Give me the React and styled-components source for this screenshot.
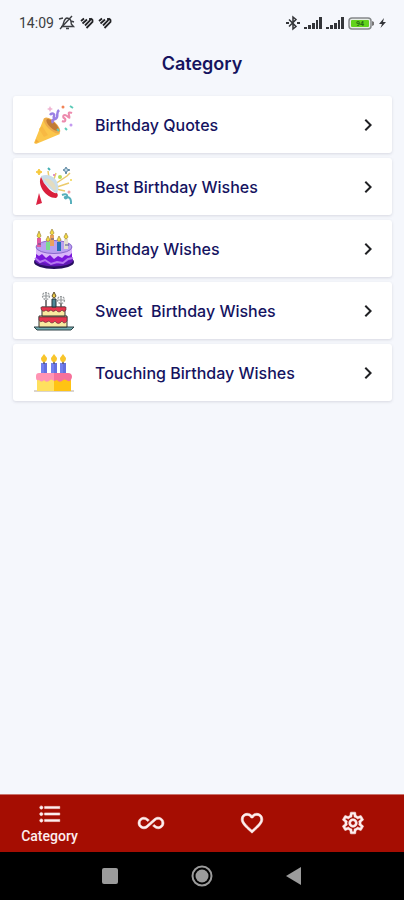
import React from "react";
import styled, { createGlobalStyle } from "styled-components";
import {
  MdAllInclusive,
  MdChevronRight,
  MdFavoriteBorder,
  MdFormatListBulleted,
  MdOutlineSettings,
} from "react-icons/md";

const GlobalStyle = createGlobalStyle`
  *, *::before, *::after { box-sizing: border-box; }
  body {
    margin: 0;
    background: #f5f7fc;
    font-family: Inter, "Noto Sans", sans-serif;
  }
`;

const Screen = styled.div`
  display: flex;
  flex-direction: column;
  min-height: 100vh;
`;

const StatusBar = styled.div`
  display: flex;
  align-items: center;
  justify-content: space-between;
  height: 46px;
  padding: 0 18px 0 19px;
  color: #3c3e42;
`;

const StatusGroup = styled.div`
  display: flex;
  align-items: center;
  gap: ${(p) => p.$gap}px;
`;

const Clock = styled.time`
  font: 400 14px/20px Roboto, sans-serif;
`;

const Title = styled.h1`
  margin: 0;
  padding: 4px 0 18px;
  color: #15135f;
  font-size: 18px;
  font-weight: 600;
  line-height: 28px;
  text-align: center;
`;

const CategoryList = styled.ul`
  display: flex;
  flex: 1;
  flex-direction: column;
  gap: 5px;
  margin: 0;
  padding: 0 12px 24px 13px;
  list-style: none;
`;

const CategoryCard = styled.button`
  display: flex;
  align-items: center;
  width: 100%;
  height: 57px;
  padding: 0 12px 0 21px;
  border: 0;
  border-radius: 3px;
  background: #fff;
  box-shadow: 0 1px 3px rgba(60, 65, 85, 0.16);
  color: #15135f;
  font: inherit;
  text-align: left;
  cursor: pointer;
`;

const CategoryName = styled.span`
  flex: 1;
  margin-left: 21px;
  font-size: 16px;
  font-weight: 500;
  line-height: 24px;
  white-space: pre;
`;

const Chevron = styled(MdChevronRight)`
  color: #202124;
`;

const TabBar = styled.nav`
  display: grid;
  grid-template-columns: repeat(4, 1fr);
  height: 58px;
  border-top: 1px solid #c9736d;
  background: #a50d02;
`;

const Tab = styled.button`
  display: flex;
  flex-direction: column;
  align-items: center;
  justify-content: center;
  padding: 0 2px 2px 0;
  border: 0;
  background: none;
  color: #fdeeee;
  font: 500 14px/18px Roboto, sans-serif;
  cursor: pointer;

  svg {
    overflow: visible;
    stroke-width: 0.5;
  }

  path[fill="none"] {
    stroke: none;
  }
`;

const SystemBar = styled.div`
  display: flex;
  align-items: center;
  justify-content: center;
  gap: 68px;
  height: 48px;
  background: #000;
`;

const SystemButton = styled.button`
  display: flex;
  padding: 0;
  border: 0;
  background: none;
  color: #9b9b9b;
`;

const MutedBell = () => (
  <svg width="18" height="16" viewBox="0 0 18 16" fill="none" stroke="currentColor" strokeWidth="1.4">
    <path d="M4 11.5c2-1.500 1-7.500 5-8.500 4 .5 4 3 4.300 6l2.200 2.500H3M8 13.500h3M2 14 14 1M1 4l4-1M13 6l3 1" />
  </svg>
);

const StripedHeart = () => (
  <svg width="14" height="12" viewBox="0 0 14 12" fill="none" stroke="#222326" strokeWidth="1.8">
    <path d="m1 4 3-2.500M2.500 6.500 7 2.500M5 8.500 10 3.500V1M6.500 11l6-6V3L11 1.500" />
  </svg>
);

const Bluetooth = () => (
  <svg width="14" height="16" viewBox="0 0 14 16" fill="none" stroke="#333539" strokeWidth="1.500">
    <path d="m3 4.500 7 7L7 14V2l3 2.500-7 7" />
    <path d="M0 8h3M11 8h3" strokeWidth="2" />
  </svg>
);

const Signal = () => (
  <svg width="18" height="12" viewBox="0 0 18 12" fill="#333539">
    <path d="M0 10h3v2H0zM4 8h3v4H4zM8 6h3v6H8zM12 3h2v9h-2zM15 0h3v12h-3z" />
  </svg>
);

const Battery = () => (
  <svg width="27" height="13" viewBox="0 0 27 13">
    <rect x="1" y="1" width="22" height="11" rx="3" fill="#e8eee8" stroke="#85888a" strokeWidth="1.500" />
    <rect x="3" y="3" width="18" height="7" rx="1" fill="#62d31c" />
    <path d="M24 4l2 1v3l-2 1z" fill="#777" />
    <text x="12" y="9" fontFamily="Roboto, sans-serif" fontSize="7" fontWeight="700" textAnchor="middle" fill="#276c16">94</text>
  </svg>
);

const Bolt = () => (
  <svg width="7" height="10" viewBox="0 0 7 10" fill="#333539">
    <path d="M5 0 0 6h3L1.500 10 7 4H4z" />
  </svg>
);

const Picture = ({ children }) => (
  <svg width="40" height="40" viewBox="0 0 40 40" aria-hidden="true">{children}</svg>
);

const PartyCone = () => (
  <Picture>
    <path d="M0 38 10 13q10 3 16 16L2 39z" fill="#fbc64b" />
    <path d="m8 21 6 9-4 2-5-8z" fill="#f8b943" />
    <path d="M2 34l3 3-4 1z" fill="#f3a93a" />
    <ellipse cx="18" cy="20.500" rx="10.500" ry="4.500" transform="rotate(43 18 20.500)" fill="#ecab4b" />
    <ellipse cx="18.500" cy="20" rx="8" ry="3" transform="rotate(43 18.500 20)" fill="#c17b35" />
    <path d="M16 10c2-3 5-1 4 1s2 4 3 1-1-4 2-7M19 18c-2-3 2-5 3-3" fill="none" stroke="#9a80e4" strokeWidth="2.500" />
    <path d="M28 16c4 2 4-2 2-3s0-5 3-2 3 2 2-1 1-3 3-2" fill="none" stroke="#ed8aad" strokeWidth="2" />
    <path d="m16 1 1 2 2 1-2 1-1 2-1-2-2-1 2-1z" fill="#efb4d2" />
    <circle cx="37" cy="20" r="1.500" fill="#c39af0" />
    <circle cx="29" cy="2" r="1.500" fill="#f18457" />
    <path d="m36 1 3 2M31 23l2 2M23 24l2 2" stroke="#5dcbb8" strokeWidth="2" />
  </Picture>
);

const PartyPopper = () => (
  <Picture>
    <path d="M16 18 14 4M18 18l4-12M18 19l15-10 3-3M20 21l15-5M22 22l9 2" fill="none" stroke="#eccb6c" strokeWidth="1.500" />
    <path d="M7 9q9-3 15 4 4 6 1 14Q14 21 7 13z" fill="#c9ddea" />
    <path d="M10 12q5-2 10 4 3 5 1 8Q15 18 10 12" fill="#e3dcc0" />
    <path d="M7 10C3 17 11 31 22 31q3-2 1-5-4 1-9-5-5-5-7-11" fill="#d91f3c" />
    <path d="m5 26 3 10-6 2z" fill="#dc2343" />
    <path d="M28 28c8-3 5 5 3 3s7-3 6 6" fill="none" stroke="#55afbb" strokeWidth="2" />
    <path d="m5 2 1 2 2 1-2 1-1 2-1-2-2-1 2-1z" fill="#f7c93c" stroke="#f7c93c" />
    <path d="m32 0 1 2 3 1-3 1-1 3-1-3-2-1 2-1z" fill="#bcd5e3" stroke="#5e88a2" />
    <path d="m14 1 2 2" stroke="#43afb3" strokeWidth="2" />
    <circle cx="26" cy="10" r="2" fill="#b9da55" />
    <circle cx="20" cy="8" r="1" fill="#d672bc" />
    <circle cx="35" cy="25" r="1.500" fill="#f1a1a4" />
    <circle cx="37" cy="13" r="1" fill="#efd34b" />
  </Picture>
);

const PurpleCake = () => (
  <Picture>
    <ellipse cx="20" cy="33" rx="20" ry="7" fill="#28105f" />
    <ellipse cx="20" cy="31.500" rx="19" ry="6" fill="#5f18b4" />
    <path d="M2 18v12q18 11 36 0V18" fill="#7b18dc" />
    <path d="M2 19v6l3 2 3-2 4 4 4-3 4 4 4-3 4 2 3-3 4 1 3-3v-5" fill="#d9b5fa" />
    <ellipse cx="20" cy="18" rx="18" ry="6.500" fill="#b9a0f0" stroke="#8a66cc" />
    <path d="m1 29 5 4 5-2 6 4 6-2 6 1 5-4 5-1" fill="none" stroke="#b477ee" strokeWidth="2" />
    <path d="M5 9v9" stroke="#e05ba4" strokeWidth="4" />
    <path d="M14 13v8" stroke="#7bdb90" strokeWidth="4" />
    <path d="M18 6v11" stroke="#eba15d" strokeWidth="4" />
    <path d="M25 13v9" stroke="#2570b7" strokeWidth="4" />
    <path d="M32 10v10" stroke="#e5e0d0" strokeWidth="4" />
    <path d="M4 15h3M17 10h3M31 16h4" stroke="#4c538e" />
    <g fill="#f4db40" stroke="#9c843b" strokeWidth=".7">
      <path d="m5 2 2 5q-2 4-4 0zM18 0l2 4q-2 4-4 0zM14 7l2 4q-2 3-4 0zM25 7l2 4q-2 3-4 0zM32 4l2 4q-2 4-4 0z" />
    </g>
  </Picture>
);

const TieredCake = () => (
  <Picture>
    <path d="M0 36h40l-3 3H3z" fill="#6fabb0" stroke="#304347" />
    <path d="M5 25h28v11H5z" fill="#faeaa0" stroke="#353333" />
    <path d="M8 16h23v9H8z" fill="#faeaa0" stroke="#353333" />
    <path d="M7 16h25v3q-2 3-4 0-3 4-6 0-3 3-5 0-3 3-5 0-3 3-5-1z" fill="#e5364e" stroke="#532b34" strokeWidth=".6" />
    <path d="M5 26h28v4q-3 4-5 0-4 5-7 0-3 4-6 0-4 3-6 0-3 2-4-1z" fill="#e5364e" stroke="#532b34" strokeWidth=".6" />
    <path d="M18 8h4v8h-4z" fill="#4c8796" stroke="#27373c" />
    <path d="m20 1 2 4q-2 4-4 0z" fill="#edca45" stroke="#5e5030" />
    <path d="M12 9v7M27 12v4" stroke="#555" strokeWidth="1.500" />
    <g fill="none" stroke="#969a9c" strokeWidth="1.200">
      <circle cx="12" cy="5" r="3.500" strokeDasharray="2 1" />
      <circle cx="27" cy="9" r="3.500" strokeDasharray="2 1" />
      <path d="M12 2v6M9 5h6M27 6v6M24 9h6" />
    </g>
  </Picture>
);

const CandleCake = () => (
  <Picture>
    <path d="M0 38h40" stroke="#b6a99c" />
    <path d="M3 26h17v12H3z" fill="#ffe05e" />
    <path d="M20 26h17v12H20z" fill="#ffc313" />
    <path d="M7 10h6v12H7zM17 10h6v12h-6zM26 10h6v12h-6z" fill="#7380ee" />
    <path d="M10 10h3v12h-3zM20 10h3v12h-3zM29 10h3v12h-3z" fill="#6470df" />
    <path d="M10 8v3M20 8v3M29 8v3" stroke="#625a58" strokeWidth="1.500" />
    <path d="m10 1 3 4q0 4-3 4-3 0-3-4zM20 1l3 4q0 4-3 4-3 0-3-4zM29 1l3 4q0 4-3 4-3 0-3-4z" fill="#f8c52b" />
    <path d="M5 20h15v8q-3-3-5 0-3 2-5-1-2 3-5 0-3 1-3-2v-2q0-3 3-3" fill="#ff94b4" />
    <path d="M20 20h14q4 0 4 4-1 5-4 4-4-3-6 0-3 2-5-1l-3 1z" fill="#f6719b" />
  </Picture>
);

const categories = [
  { name: "Birthday Quotes", Art: PartyCone },
  { name: "Best Birthday Wishes", Art: PartyPopper },
  { name: "Birthday Wishes", Art: PurpleCake },
  { name: "Sweet  Birthday Wishes", Art: TieredCake },
  { name: "Touching Birthday Wishes", Art: CandleCake },
];

export default function App() {
  return (
    <Screen>
      <GlobalStyle />
      <StatusBar>
        <StatusGroup $gap={4}>
          <Clock>14:09</Clock>
          <MutedBell />
          <StripedHeart />
          <StripedHeart />
        </StatusGroup>
        <StatusGroup $gap={4}>
          <Bluetooth />
          <Signal />
          <Signal />
          <Battery />
          <Bolt />
        </StatusGroup>
      </StatusBar>
      <Title>Category</Title>
      <CategoryList>
        {categories.map(({ name, Art }) => (
          <li key={name}>
            <CategoryCard type="button">
              <Art />
              <CategoryName>{name}</CategoryName>
              <Chevron size={24} />
            </CategoryCard>
          </li>
        ))}
      </CategoryList>
      <TabBar>
        <Tab type="button" aria-current="page">
          <MdFormatListBulleted size={26} />
          Category
        </Tab>
        <Tab type="button" aria-label="Explore"><MdAllInclusive size={26} /></Tab>
        <Tab type="button" aria-label="Favorites"><MdFavoriteBorder size={26} /></Tab>
        <Tab type="button" aria-label="Settings"><MdOutlineSettings size={26} /></Tab>
      </TabBar>
      <SystemBar>
        <SystemButton type="button" aria-label="Recent apps">
          <svg width="24" height="24" viewBox="0 0 24 24"><rect x="4" y="4" width="16" height="16" rx="2" fill="currentColor" /></svg>
        </SystemButton>
        <SystemButton type="button" aria-label="Home">
          <svg width="24" height="24" viewBox="0 0 24 24"><circle cx="12" cy="12" r="9.500" fill="none" stroke="currentColor" strokeWidth="2" /><circle cx="12" cy="12" r="6.500" fill="currentColor" /></svg>
        </SystemButton>
        <SystemButton type="button" aria-label="Back">
          <svg width="24" height="24" viewBox="0 0 24 24"><path d="M4 12 19 3v18z" fill="currentColor" /></svg>
        </SystemButton>
      </SystemBar>
    </Screen>
  );
}
